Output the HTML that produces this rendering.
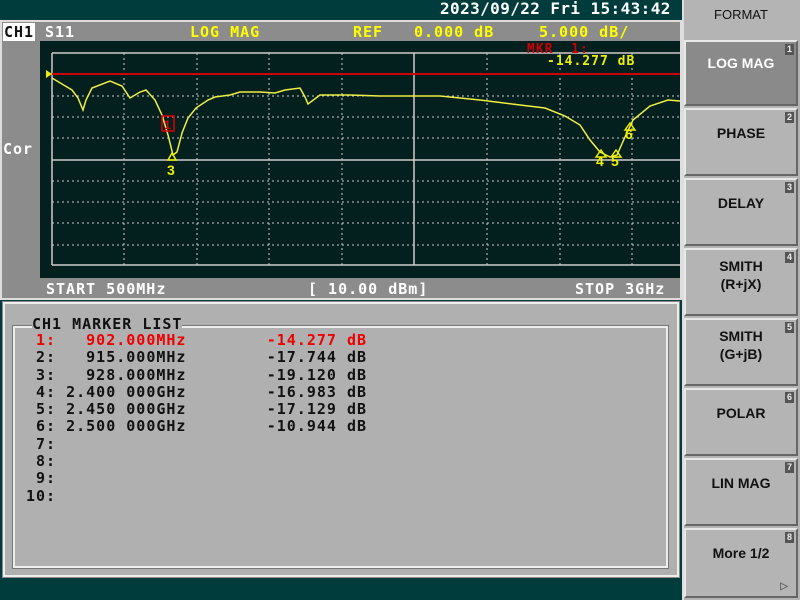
<!DOCTYPE html>
<html><head><style>
*{margin:0;padding:0;box-sizing:border-box}
body{width:800px;height:600px;background:#003c3c;position:relative;overflow:hidden;font-family:"DejaVu Sans Mono","Liberation Mono",monospace;font-weight:bold}
.a{position:absolute;white-space:pre}
.t{font-size:15px;letter-spacing:1px}
.btn{position:absolute;left:684px;width:114px;background:#b4b4b4;border:2px solid #e8e8e8;border-right-color:#666;border-bottom-color:#666;color:#111;font-size:14px;text-align:center;font-family:"Liberation Sans",sans-serif}
.n{position:absolute;right:2px;top:2px;width:9px;height:11px;background:#555;color:#eee;font-size:9px;line-height:11px}
</style></head><body>
<div class="a" style="left:682px;top:0;width:118px;height:600px;background:#b4b4b4;border-left:2px solid #ddd"></div>
<div class="a" style="left:440px;top:0;color:#fff;font-size:16px;letter-spacing:0.4px;line-height:18px">2023/09/22 Fri 15:43:42</div>
<div class="a" style="left:0;top:20px;width:682px;height:280px;background:#8c8c8c;border:2px solid #ddd"></div>
<div class="a t" style="left:3px;top:23px;background:#fff;color:#111;padding:0 1px">CH1</div>
<div class="a t" style="left:45px;top:23px;color:#fff">S11</div>
<div class="a t" style="left:190px;top:23px;color:#ff0">LOG MAG</div>
<div class="a t" style="left:353px;top:23px;color:#ff0">REF</div>
<div class="a t" style="left:414px;top:23px;color:#ff0">0.000 dB</div>
<div class="a t" style="left:539px;top:23px;color:#ff0">5.000 dB/</div>
<div class="a t" style="left:3px;top:140px;color:#fff">Cor</div>
<div class="a" style="left:40px;top:41px;width:640px;height:237px;background:#03201f"></div>
<svg class="a" style="left:0;top:0" width="800" height="600">
<g stroke="#ccc" stroke-width="1" stroke-dasharray="2,3" fill="none">
<path d="M124 53V265M197 53V265M269 53V265M342 53V265M487 53V265M560 53V265M632 53V265"/>
<path d="M52 96H680M52 117H680M52 138H680M52 181H680M52 202H680M52 223H680M52 245H680"/>
</g>
<g stroke="#ccc" stroke-width="1.5" fill="none"><path d="M52 53H680M52 160H680M52 265H680M52 53V265M414 53V265"/></g>
<path d="M52 74H680" stroke="#c00" stroke-width="2"/>
<path d="M46 70L52 74L46 78Z" fill="#ee0"/>
<polyline fill="none" stroke="#ee4" stroke-width="1.5" points="52,78 62,84 72,90 78,98 83,110 86,100 92,88 110,81 122,86 130,98 140,92 146,90 155,100 162,115 168,135 173,155 177,152 182,133 188,118 196,108 208,100 215,97 230,95 240,92 260,92 275,93 285,90 300,88 305,97 308,104 320,95 350,95 380,96 440,96 480,100 520,105 545,108 565,116 580,125 590,140 600,152 610,157 617,155 625,137 633,120 650,106 668,100 680,101"/>
<rect x="162" y="116" width="12" height="15" fill="none" stroke="#d00" stroke-width="1.5"/>
<text x="164" y="129" fill="#d00" font-size="12" font-family="Liberation Sans">1</text>
<g fill="none" stroke="#ee0" stroke-width="1.5"><path d="M168 160l4-7 4 7z M596 157l5-7 5 7z M611 157l5-7 5 7z M625 130l5-7 5 7z"/></g>
<g fill="#ee0" font-size="14" font-family="Liberation Sans" font-weight="bold"><text x="167" y="175">3</text><text x="596" y="166">4</text><text x="611" y="166">5</text><text x="625" y="139">6</text></g>
</svg>
<div class="a" style="left:527px;top:42px;color:#c00;font-size:13px;letter-spacing:1px">MKR  1:</div>
<div class="a" style="left:547px;top:54px;color:#ee0;font-size:13px;letter-spacing:1px">-14.277 dB</div>
<div class="a t" style="left:46px;top:280px;color:#fff">START 500MHz</div>
<div class="a t" style="left:308px;top:280px;color:#fff">[ 10.00 dBm]</div>
<div class="a t" style="left:575px;top:280px;color:#fff">STOP 3GHz</div>
<div class="a" style="left:3px;top:302px;width:676px;height:275px;background:#b0b0b0;border:2px solid #eee;outline:1px solid #888"></div>
<div class="a" style="left:13px;top:326px;width:655px;height:242px;border:2px solid #eee;outline:1px solid #777"></div>
<div class="a t" style="left:32px;top:315px;background:#b0b0b0;color:#111;line-height:18px">CH1 MARKER LIST</div>
<div class="a t" style="left:36px;top:332px;color:#111;line-height:17.3px"><span style="color:#e00">1:   902.000MHz        -14.277 dB</span>
2:   915.000MHz        -17.744 dB
3:   928.000MHz        -19.120 dB
4: 2.400 000GHz        -16.983 dB
5: 2.450 000GHz        -17.129 dB
6: 2.500 000GHz        -10.944 dB
7:
8:
9:
<span style="margin-left:-10px">10:</span></div>
<div class="a" style="left:684px;top:7px;width:114px;text-align:center;color:#111;font-size:13px;font-family:'Liberation Sans',sans-serif;font-weight:normal">FORMAT</div>
<div class="btn" style="top:40px;height:66px;background:#8a8a8a;color:#fff;padding-top:13px">LOG MAG<span class="n">1</span></div>
<div class="btn" style="top:108px;height:68px;padding-top:15px">PHASE<span class="n">2</span></div>
<div class="btn" style="top:178px;height:68px;padding-top:15px">DELAY<span class="n">3</span></div>
<div class="btn" style="top:248px;height:68px;padding-top:7px;line-height:18px">SMITH<br>(R+jX)<span class="n">4</span></div>
<div class="btn" style="top:318px;height:68px;padding-top:7px;line-height:18px">SMITH<br>(G+jB)<span class="n">5</span></div>
<div class="btn" style="top:388px;height:68px;padding-top:15px">POLAR<span class="n">6</span></div>
<div class="btn" style="top:458px;height:68px;padding-top:15px">LIN MAG<span class="n">7</span></div>
<div class="btn" style="top:528px;height:70px;padding-top:15px">More 1/2<span class="n">8</span><span style="position:absolute;right:8px;bottom:4px;font-size:10px;color:#666">▷</span></div>
</body></html>
